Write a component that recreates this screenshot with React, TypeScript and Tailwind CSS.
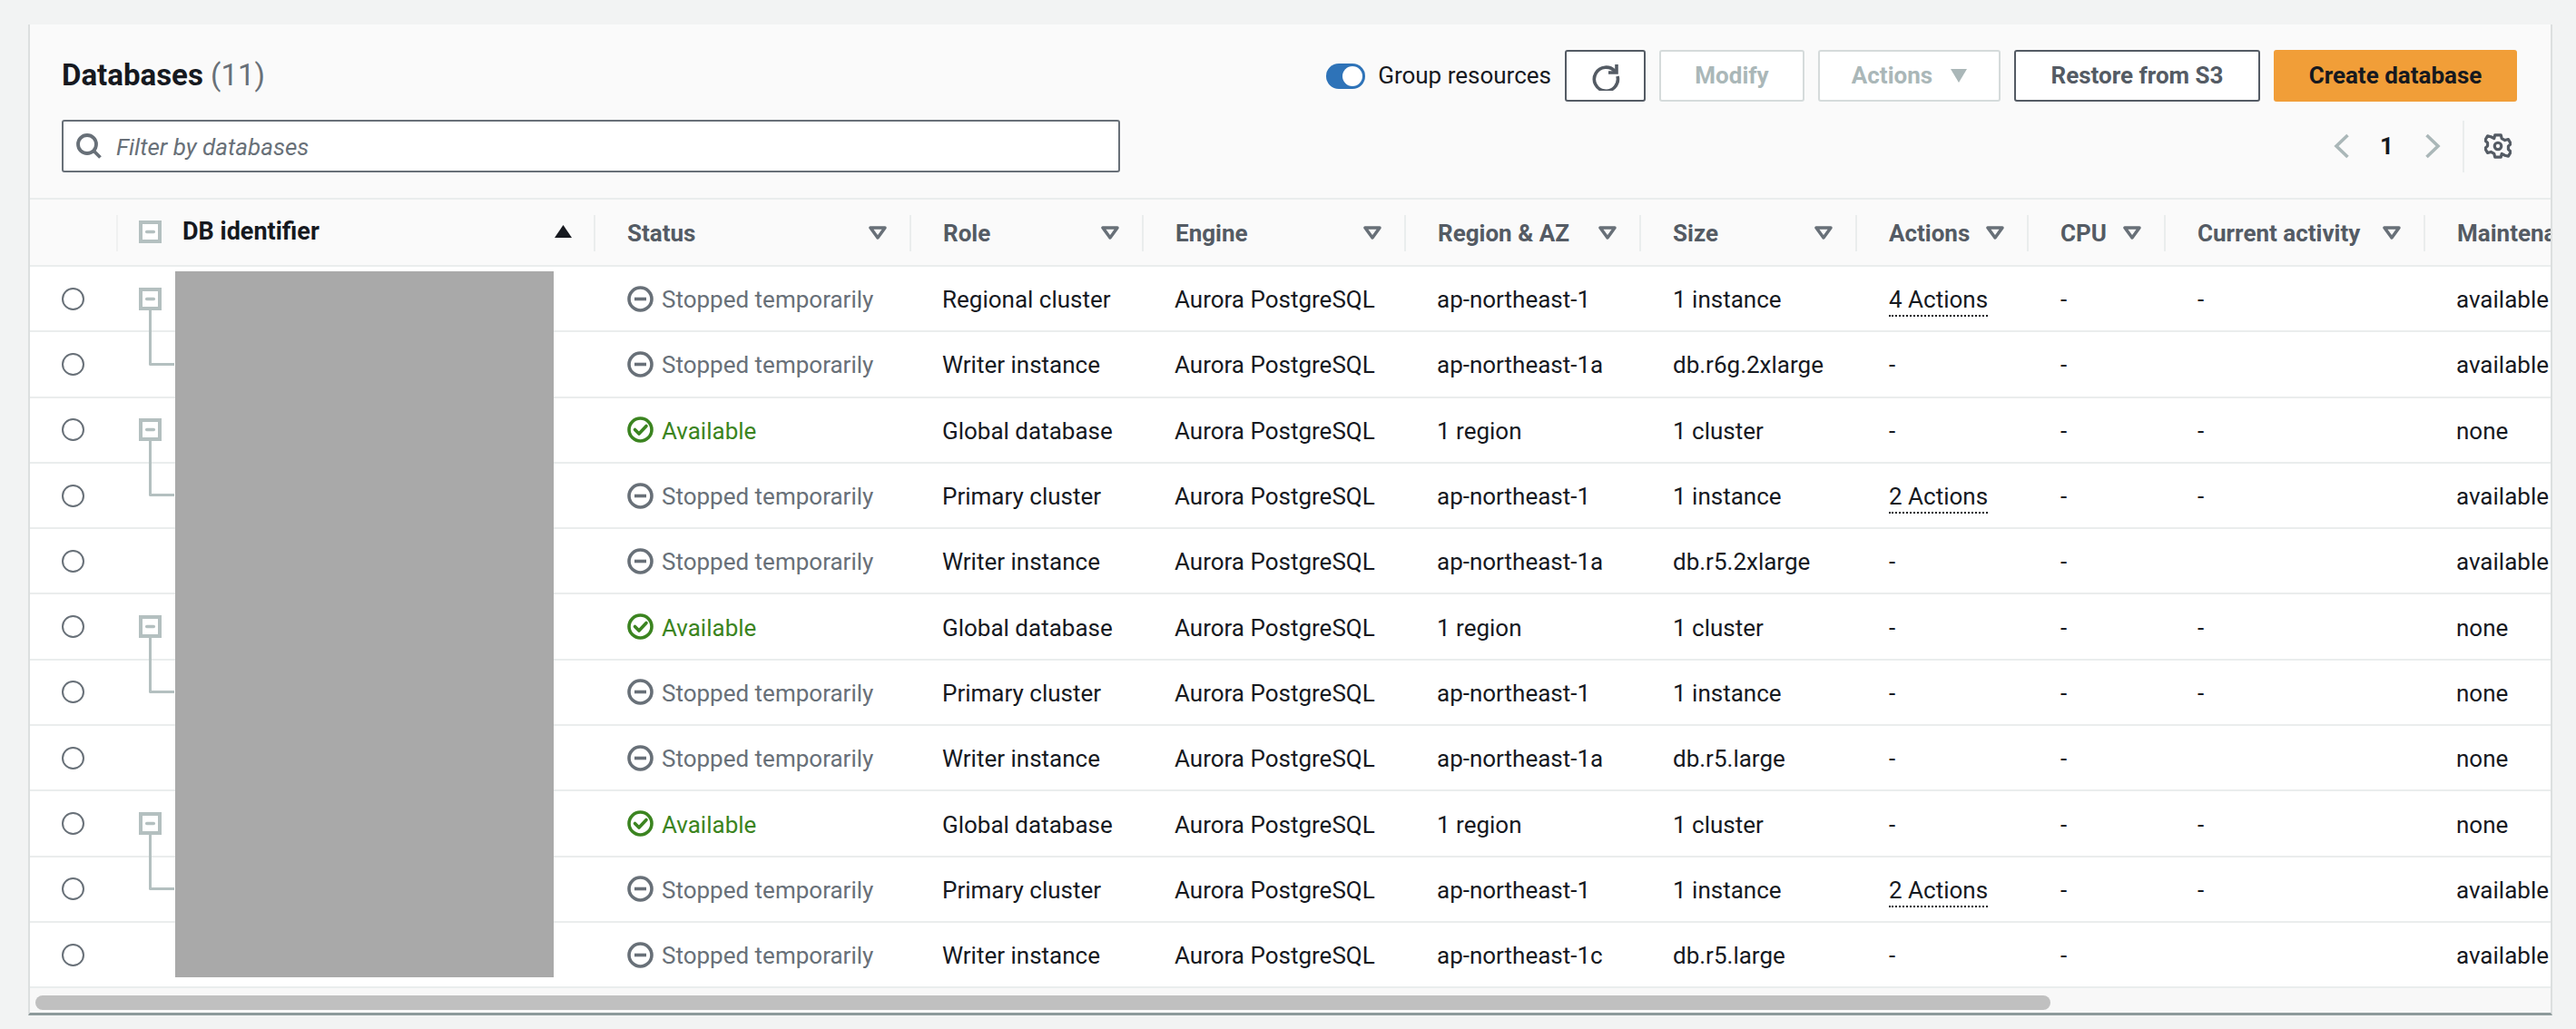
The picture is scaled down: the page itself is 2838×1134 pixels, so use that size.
import { Minus } from "lucide-react";

type Row = {
  status: "stopped" | "available";
  role: string;
  region: string;
  size: string;
  actions: string;
  activity: string;
  maintenance: string;
  tree?: boolean;
};

const rows: Row[] = [
  { status: "stopped", role: "Regional cluster", region: "ap-northeast-1", size: "1 instance", actions: "4 Actions", activity: "-", maintenance: "available", tree: true },
  { status: "stopped", role: "Writer instance", region: "ap-northeast-1a", size: "db.r6g.2xlarge", actions: "-", activity: "", maintenance: "available" },
  { status: "available", role: "Global database", region: "1 region", size: "1 cluster", actions: "-", activity: "-", maintenance: "none", tree: true },
  { status: "stopped", role: "Primary cluster", region: "ap-northeast-1", size: "1 instance", actions: "2 Actions", activity: "-", maintenance: "available" },
  { status: "stopped", role: "Writer instance", region: "ap-northeast-1a", size: "db.r5.2xlarge", actions: "-", activity: "", maintenance: "available" },
  { status: "available", role: "Global database", region: "1 region", size: "1 cluster", actions: "-", activity: "-", maintenance: "none", tree: true },
  { status: "stopped", role: "Primary cluster", region: "ap-northeast-1", size: "1 instance", actions: "-", activity: "-", maintenance: "none" },
  { status: "stopped", role: "Writer instance", region: "ap-northeast-1a", size: "db.r5.large", actions: "-", activity: "", maintenance: "none" },
  { status: "available", role: "Global database", region: "1 region", size: "1 cluster", actions: "-", activity: "-", maintenance: "none", tree: true },
  { status: "stopped", role: "Primary cluster", region: "ap-northeast-1", size: "1 instance", actions: "2 Actions", activity: "-", maintenance: "available" },
  { status: "stopped", role: "Writer instance", region: "ap-northeast-1c", size: "db.r5.large", actions: "-", activity: "", maintenance: "available" },
];

const columns = "grid grid-cols-[95px_526px_348px_256px_289px_259px_238px_189px_151px_286px_242px]";

function FilterCaret() {
  return (
    <svg width="20" height="15" viewBox="0 0 20 15" className="shrink-0">
      <path d="M2 2h16l-8 11z" fill="none" stroke="#687078" strokeWidth="3.5" strokeLinejoin="round" />
    </svg>
  );
}

function TreeBox() {
  return (
    <div className="flex h-[25px] w-[25px] items-center justify-center border-[4px] border-[#b4c0c0] bg-white">
      <Minus size={13} strokeWidth={3.5} color="#b4c0c0" absoluteStrokeWidth />
    </div>
  );
}

function HeaderCell({ label, last }: { label: string; last?: boolean }) {
  return (
    <div className="relative flex items-center justify-between pl-[37px] pr-[25px] font-bold text-[#545b64]">
      <span className="whitespace-nowrap pt-[2px]">{label}</span>
      {!last && <FilterCaret />}
      <span className="absolute left-0 top-[17px] h-[40px] w-[2px] bg-[#eaeded]" />
    </div>
  );
}

function StatusCell({ status }: { status: Row["status"] }) {
  if (status === "available") {
    return (
      <div className="flex items-center gap-[9px] pl-[37px]">
        <svg width="29" height="29" viewBox="0 0 29 29" fill="none" stroke="#3b8420" strokeWidth="3.6">
          <circle cx="14.5" cy="14.5" r="12.5" />
          <path d="M8.5 14.5l4.5 4.5 8-8.5" strokeLinecap="round" strokeLinejoin="round" />
        </svg>
        <span className="pt-[3px] text-[#3b8420]">Available</span>
      </div>
    );
  }
  return (
    <div className="flex items-center gap-[9px] pl-[37px] text-[#687078]">
      <svg width="29" height="29" viewBox="0 0 29 29" fill="none" stroke="#687078" strokeWidth="3.6">
        <circle cx="14.5" cy="14.5" r="12.5" />
        <path d="M8 14.5h13" />
      </svg>
      <span className="whitespace-nowrap pt-[3px]">Stopped temporarily</span>
    </div>
  );
}

export default function App() {
  return (
    <div className="h-[1134px] w-[2838px] overflow-hidden bg-[#f2f3f3] pl-[31px] pt-[27px] text-[26px] text-[#16191f] [font-family:Roboto,sans-serif]">
      <div className="h-[1092px] w-[2781px] overflow-hidden border-x-2 border-b-[3px] border-x-[#dcdfdf] border-b-[#8d9a9b] bg-[#fafafa]">
        <div className="flex h-[193px] flex-col border-b-2 border-[#eaeded] pl-[35px] pr-[37px] pt-[28px]">
          <div className="flex items-center justify-between">
            <div className="pb-[2px] text-[33px] font-bold leading-none">
              Databases <span className="font-normal text-[#687078]">(11)</span>
            </div>
            <div className="flex items-center gap-[15px]">
              <div className="flex items-center gap-[14px]">
                <div className="flex h-[28px] w-[43px] items-center justify-end rounded-full bg-[#2e73b8] pr-[3px]">
                  <div className="h-[22px] w-[22px] rounded-full bg-white" />
                </div>
                <span className="whitespace-nowrap">Group resources</span>
              </div>
              <button className="flex h-[57px] w-[89px] items-center justify-center rounded-[3px] border-2 border-[#545b64] bg-white">
                <svg width="32" height="32" viewBox="0 0 32 32" fill="none" stroke="#545b64" strokeWidth="3.6">
                  <path d="M26.5 11A13 13 0 1 0 29 16" />
                  <path d="M28 3v9h-9" />
                </svg>
              </button>
              <button className="h-[57px] w-[160px] rounded-[3px] border-2 border-[#d5dbdb] bg-white font-bold text-[#aab7b8]">Modify</button>
              <button className="flex h-[57px] w-[201px] items-center justify-center gap-[20px] rounded-[3px] border-2 border-[#d5dbdb] bg-white font-bold text-[#aab7b8]">
                Actions
                <svg width="18" height="15" viewBox="0 0 18 15"><path d="M0 0h18l-9 15z" fill="#aab7b8" /></svg>
              </button>
              <button className="h-[57px] w-[271px] whitespace-nowrap rounded-[3px] border-2 border-[#545b64] bg-white font-bold text-[#545b64]">Restore from S3</button>
              <button className="h-[57px] w-[268px] whitespace-nowrap rounded-[3px] bg-[#f19e38] font-bold text-[#16191f]">Create database</button>
            </div>
          </div>
          <div className="mt-[20px] flex items-center justify-between">
            <div className="flex h-[58px] w-[1166px] items-center gap-[16px] rounded-[3px] border-2 border-[#687078] bg-white pl-[14px]">
              <svg width="28" height="28" viewBox="0 0 28 28" fill="none" stroke="#687078" strokeWidth="3.8">
                <circle cx="12" cy="12" r="10" />
                <path d="M19 19l7.5 7.5" />
              </svg>
              <span className="pt-[2px] italic text-[#687078]">Filter by databases</span>
            </div>
            <div className="flex h-[57px] items-center">
              <svg width="18" height="28" viewBox="0 0 18 28" fill="none" stroke="#aab7b8" strokeWidth="3.6"><path d="M15.5 2L3 14l12.5 12" /></svg>
              <span className="ml-[33px] w-[12px] font-bold leading-none">1</span>
              <svg width="18" height="28" viewBox="0 0 18 28" fill="none" stroke="#aab7b8" strokeWidth="3.6" className="ml-[37px]"><path d="M2.5 2L15 14 2.5 26" /></svg>
              <div className="ml-[24px] h-[57px] w-[2px] bg-[#eaeded]" />
              <svg width="30" height="30" viewBox="-1 -1 32 32" fill="none" stroke="#545b64" strokeWidth="3.4" className="ml-[22px] mr-[6px]">
                <circle cx="15" cy="15" r="4" />
                <path d="M11.5 2h7l1 4 3.7 2.1 4-1.1 3 5.300-3 2.900v3.600l3 2.900-3 5.300-4-1.100L19.500 24l-1 4h-7l-1-4-3.700-2.100-4 1.100-3-5.300 3-2.900v-3.600l-3-2.900 3-5.300 4 1.100L10.500 6z" strokeLinejoin="round" />
              </svg>
            </div>
          </div>
        </div>

        <div className="relative">
          <div className={`${columns} h-[74px] border-b-2 border-[#eaeded]`}>
            <div />
            <div className="relative flex items-center pb-[2px] pl-[25px] pr-[24px] font-bold">
              <span className="absolute left-0 top-[17px] h-[40px] w-[2px] bg-[#f0f1f1]" />
              <TreeBox />
              <span className="ml-[23px] flex-1 whitespace-nowrap text-[27px]">DB identifier</span>
              <svg width="19" height="14" viewBox="0 0 19 14"><path d="M9.500 0l9.500 14H0z" fill="#16191f" /></svg>
            </div>
            <HeaderCell label="Status" />
            <HeaderCell label="Role" />
            <HeaderCell label="Engine" />
            <HeaderCell label="Region & AZ" />
            <HeaderCell label="Size" />
            <HeaderCell label="Actions" />
            <HeaderCell label="CPU" />
            <HeaderCell label="Current activity" />
            <HeaderCell label="Maintenance" last />
          </div>

          <div className="relative bg-white">
            {rows.map((row, i) => (
              <div key={i} className={`${columns} h-[72.300px] items-center border-b-2 border-[#eaeded]`}>
                <div className="pl-[35px]">
                  <div className="h-[25px] w-[25px] rounded-full border-2 border-[#687078] bg-white" />
                </div>
                <div className="relative pl-[25px]">
                  {row.tree && (
                    <>
                      <TreeBox />
                      <div className="absolute left-[36px] top-[25px] h-[61px] w-[28px] rounded-bl-[2px] border-b-[3px] border-l-[3px] border-[#b4c0c0]" />
                    </>
                  )}
                </div>
                <StatusCell status={row.status} />
                <div className="whitespace-nowrap pl-[36px] pt-[3px]">{row.role}</div>
                <div className="whitespace-nowrap pl-[36px] pt-[3px]">Aurora PostgreSQL</div>
                <div className="whitespace-nowrap pl-[36px] pt-[3px]">{row.region}</div>
                <div className="whitespace-nowrap pl-[37px] pt-[3px]">{row.size}</div>
                <div className="whitespace-nowrap pl-[37px] pt-[3px]">
                  {row.actions === "-" ? "-" : (
                    <span className="inline-block border-b-2 border-dotted border-[#16191f] leading-[33px]">{row.actions}</span>
                  )}
                </div>
                <div className="pl-[37px] pt-[3px]">-</div>
                <div className="pl-[37px] pt-[3px]">{row.activity}</div>
                <div className="pl-[36px] pt-[3px]">{row.maintenance}</div>
              </div>
            ))}
            <div className="absolute bottom-[12px] left-[160px] top-[5px] w-[417px] bg-[#a9a9a9]" />
          </div>

          <div className="h-[30px] bg-[#f8f8f8] pl-[6px] pt-[8px]">
            <div className="h-[16px] w-[2220px] rounded-full bg-[#c0c0c0]" />
          </div>
        </div>
      </div>
    </div>
  );
}
